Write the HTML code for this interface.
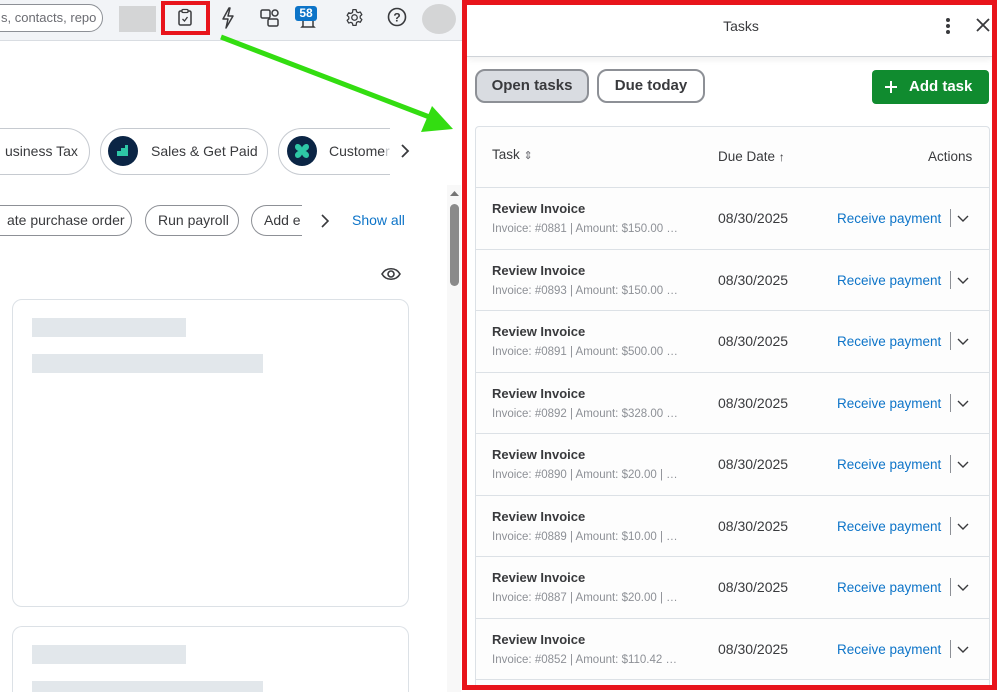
<!DOCTYPE html>
<html style="width:999px;height:692px;overflow:hidden"><head><meta charset="utf-8"><style>
*{box-sizing:border-box;margin:0;padding:0}
body{width:999px;height:692px;overflow:hidden;background:#fff;font-family:"Liberation Sans",Arial,sans-serif;position:relative;color:#393a3d}
.abs{position:absolute}
.topbar{left:0;top:0;width:465px;height:41px;background:#f2f4f7;border-bottom:1px solid #d9dde2}
.pill{position:absolute;border:1px solid #c6cad0;border-radius:24px;background:#fff;font-size:14px;color:#393a3d;white-space:nowrap;overflow:hidden}
.chip{position:absolute;border:1px solid #8d9096;border-radius:16px;background:#fff;font-size:14px;color:#393a3d;white-space:nowrap;overflow:hidden;height:31px;line-height:29px;padding:0 12px}
.card{position:absolute;left:12px;width:397px;border:1px solid #dce1e6;border-radius:10px;background:#fff}
.sk{position:absolute;background:#e2e7eb}
.panel{left:462px;top:0;width:535px;height:690px;border:5px solid #e8141b;background:#fff;overflow:hidden}
.row{position:absolute;left:0;width:514px;height:62px;border-top:1px solid #dce1e6}
.t1{position:absolute;left:16px;top:13px;font-size:13px;font-weight:bold;color:#393a3d}
.t2{position:absolute;left:16px;top:35px;font-size:11.5px;color:#8d9096;white-space:nowrap}
.dd{position:absolute;left:242px;top:22px;font-size:14px;color:#393a3d}
.rp{position:absolute;left:361px;top:23px;font-size:13.5px;color:#0d74c8}
.sep{position:absolute;left:474px;top:21px;width:1px;height:18px;background:#8d9096}
.chev{position:absolute;left:481px;top:27px}
</style></head><body>
<div class="abs topbar"></div>
<div class="pill" style="left:-20px;top:4px;width:123px;height:28px;line-height:26px;border-color:#8d9096;padding-left:20px;font-size:13px;color:#6b6c72">s, contacts, repo</div>
<div class="abs" style="left:119px;top:6px;width:37px;height:26px;background:#d4d5d6"></div>
<div class="abs" style="left:161px;top:1px;width:49px;height:34px;border:4px solid #e8141b"></div>
<svg class="abs" style="left:176px;top:8px" width="18" height="20" viewBox="0 0 18 20"><rect x="3" y="3" width="12" height="14" rx="1.5" fill="none" stroke="#393a3d" stroke-width="1.5"/><rect x="6" y="1.5" width="6" height="3" rx="1" fill="#fff" stroke="#393a3d" stroke-width="1.3"/><path d="M6.5 11l2 2 3-4" fill="none" stroke="#393a3d" stroke-width="1.3"/></svg>
<svg class="abs" style="left:220px;top:7px" width="16" height="22" viewBox="0 0 16 22"><path d="M9 1L3 12h5l-2 9 7-12H8l2-8z" fill="none" stroke="#393a3d" stroke-width="1.5" stroke-linejoin="round"/></svg>
<svg class="abs" style="left:260px;top:8px" width="20" height="20" viewBox="0 0 20 20"><rect x="1" y="2" width="9" height="8" rx="1.5" fill="none" stroke="#393a3d" stroke-width="1.5"/><rect x="12" y="2" width="6" height="6" rx="3" fill="none" stroke="#393a3d" stroke-width="1.5"/><rect x="8" y="11" width="10" height="7" rx="1.5" fill="none" stroke="#393a3d" stroke-width="1.5"/></svg>
<svg class="abs" style="left:300px;top:14px" width="16" height="16" viewBox="0 0 16 16"><path d="M3 12V7a5 5 0 0110 0v5l1 1H2z" fill="none" stroke="#393a3d" stroke-width="1.5"/></svg>
<div class="abs" style="left:295px;top:6px;width:22px;height:15px;background:#0d74c8;border-radius:3px;color:#fff;font-size:12px;font-weight:bold;text-align:center;line-height:15px">58</div>
<svg class="abs" style="left:345px;top:8px" width="19" height="19" viewBox="0 0 24 24"><path d="M12 8.5a3.5 3.5 0 100 7 3.5 3.5 0 000-7z M10 2h4l.6 2.8 2 1.1 2.7-.9 2 3.4-2.1 1.9v2.4l2.1 1.9-2 3.4-2.7-.9-2 1.1L14 22h-4l-.6-2.8-2-1.1-2.7.9-2-3.4 2.1-1.9V11.3L2.7 9.4l2-3.4 2.7.9 2-1.1z" fill="none" stroke="#393a3d" stroke-width="1.6" stroke-linejoin="round"/></svg>
<svg class="abs" style="left:387px;top:7px" width="20" height="20" viewBox="0 0 20 20"><circle cx="10" cy="10" r="8.5" fill="none" stroke="#393a3d" stroke-width="1.6"/><text x="10" y="14.5" font-size="12" font-weight="bold" text-anchor="middle" fill="#393a3d" font-family="Liberation Sans">?</text></svg>
<div class="abs" style="left:422px;top:4px;width:34px;height:30px;border-radius:50%;background:#d4d5d6"></div>

<div class="pill" style="left:-30px;top:128px;width:120px;height:47px;line-height:45px;padding-left:34px">usiness Tax</div>
<div class="pill" style="left:100px;top:128px;width:168px;height:47px;line-height:45px;padding-left:50px">Sales &amp; Get Paid</div>
<div class="abs" style="left:108px;top:136px;width:30px;height:30px;border-radius:50%;background:#0b2545"></div>
<svg class="abs" style="left:114px;top:142px" width="18" height="18" viewBox="0 0 18 18"><path d="M3 14V9h4V6h4V3h3v11z" fill="#2ec7a6"/></svg>
<div class="pill" style="left:278px;top:128px;width:112px;height:47px;line-height:45px;padding-left:50px;border-right:none;border-radius:24px 0 0 24px;color:#393a3d">Custome<span style="color:#c0c3c8">r</span></div>
<div class="abs" style="left:287px;top:136px;width:30px;height:30px;border-radius:50%;background:#0b2545"></div>
<svg class="abs" style="left:292px;top:141px" width="20" height="20" viewBox="0 0 20 20"><path d="M10 6.5C8 2 3 2 3 6c0 2 2 3.5 3.5 4C5 10.5 3 12 3 14c0 4 5 4 7-.5 2 4.5 7 4.5 7 .5 0-2-2-3.5-3.5-4 1.5-.5 3.5-2 3.5-4 0-4-5-4-7 .5z" fill="#2ec7a6"/></svg>
<svg class="abs" style="left:399px;top:143px" width="12" height="16" viewBox="0 0 12 16"><path d="M3 2l6 6-6 6" fill="none" stroke="#393a3d" stroke-width="1.8"/></svg>

<div class="chip" style="left:-20px;top:205px;width:152px;padding-left:26px">ate purchase order</div>
<div class="chip" style="left:145px;top:205px;width:94px">Run payroll</div>
<div class="chip" style="left:251px;top:205px;width:51px;border-right:none;border-radius:16px 0 0 16px">Add e</div>
<svg class="abs" style="left:319px;top:213px" width="12" height="16" viewBox="0 0 12 16"><path d="M3 2l6 6-6 6" fill="none" stroke="#393a3d" stroke-width="1.6"/></svg>
<div class="abs" style="left:352px;top:212px;font-size:14px;color:#0d74c8">Show all</div>

<div class="abs" style="left:447px;top:185px;width:14px;height:507px;background:#f8f8f8"></div>
<svg class="abs" style="left:450px;top:190px" width="9" height="7" viewBox="0 0 9 7"><path d="M0 6L4.5 1 9 6z" fill="#757575"/></svg>
<div class="abs" style="left:450px;top:204px;width:9px;height:82px;border-radius:5px;background:#8a8a8a"></div>
<svg class="abs" style="left:381px;top:266px" width="20" height="16" viewBox="0 0 20 16"><path d="M1 8c4-7 14-7 18 0-4 7-14 7-18 0z" fill="none" stroke="#393a3d" stroke-width="1.6"/><circle cx="10" cy="8" r="3" fill="none" stroke="#393a3d" stroke-width="1.6"/></svg>
<div class="card" style="top:299px;height:308px"></div>
<div class="sk" style="left:32px;top:318px;width:154px;height:19px"></div>
<div class="sk" style="left:32px;top:354px;width:231px;height:19px"></div>
<div class="card" style="top:626px;height:66px;border-bottom:none;border-radius:10px 10px 0 0"></div>
<div class="sk" style="left:32px;top:645px;width:154px;height:19px"></div>
<div class="sk" style="left:32px;top:681px;width:231px;height:11px"></div>

<svg class="abs" style="left:0;top:0" width="470" height="140" viewBox="0 0 470 140"><line x1="221" y1="37" x2="432" y2="118" stroke="#33dd11" stroke-width="5"/><path d="M453 129L432 106 421 132z" fill="#33dd11"/></svg>

<div class="abs panel">
  <div class="abs" style="left:0;top:0;width:525px;height:52px;border-bottom:1px solid #cfd3d8;box-shadow:0 3px 6px rgba(0,0,0,.06)"></div>
  <div class="abs" style="left:0;top:13px;width:548px;text-align:center;font-size:14px;color:#393a3d">Tasks</div>
  <svg class="abs" style="left:478px;top:11px" width="6" height="20" viewBox="0 0 6 20"><circle cx="3" cy="4" r="2" fill="#393a3d"/><circle cx="3" cy="10" r="2" fill="#393a3d"/><circle cx="3" cy="16" r="2" fill="#393a3d"/></svg>
  <svg class="abs" style="left:508px;top:12px" width="16" height="16" viewBox="0 0 16 16"><path d="M2 2l12 12M14 2L2 14" stroke="#393a3d" stroke-width="1.8"/></svg>
  <div class="abs" style="left:8px;top:64px;width:114px;height:34px;border:2px solid #8d9096;border-radius:10px;background:#d9dce1;font-size:15px;font-weight:bold;text-align:center;line-height:30px;color:#393a3d">Open tasks</div>
  <div class="abs" style="left:130px;top:64px;width:108px;height:34px;border:2px solid #8d9096;border-radius:10px;background:#fff;font-size:15px;font-weight:bold;text-align:center;line-height:30px;color:#393a3d">Due today</div>
  <div class="abs" style="left:405px;top:65px;width:117px;height:34px;border-radius:4px;background:#108b2f;color:#fff;font-size:15px;font-weight:bold;line-height:34px;padding-left:37px">Add task</div>
  <svg class="abs" style="left:417px;top:75px" width="14" height="14" viewBox="0 0 14 14"><path d="M7 1v12M1 7h12" stroke="#fff" stroke-width="2"/></svg>
  <div class="abs" style="left:8px;top:121px;width:515px;height:559px;border:1px solid #dce1e6;border-bottom:none;border-radius:4px 4px 0 0;background:#fdfdfd;overflow:hidden">
    <div class="abs" style="left:16px;top:20px;font-size:13.5px">Task <span style="font-size:11px;color:#6b6c72">⇕</span></div>
    <div class="abs" style="left:242px;top:22px;font-size:13.5px">Due Date <span style="font-size:12px">↑</span></div>
    <div class="abs" style="left:452px;top:22px;font-size:13.5px">Actions</div>
    <div class="row" style="top:60px"><div class="t1">Review Invoice</div><div class="t2">Invoice: #0881 | Amount: $150.00 …</div><div class="dd">08/30/2025</div><div class="rp">Receive payment</div><div class="sep"></div><svg class="chev" width="12" height="8" viewBox="0 0 12 8"><path d="M1 1l5 5 5-5" fill="none" stroke="#393a3d" stroke-width="1.4"/></svg></div>
    <div class="row" style="top:122px"><div class="t1">Review Invoice</div><div class="t2">Invoice: #0893 | Amount: $150.00 …</div><div class="dd">08/30/2025</div><div class="rp">Receive payment</div><div class="sep"></div><svg class="chev" width="12" height="8" viewBox="0 0 12 8"><path d="M1 1l5 5 5-5" fill="none" stroke="#393a3d" stroke-width="1.4"/></svg></div>
    <div class="row" style="top:183px"><div class="t1">Review Invoice</div><div class="t2">Invoice: #0891 | Amount: $500.00 …</div><div class="dd">08/30/2025</div><div class="rp">Receive payment</div><div class="sep"></div><svg class="chev" width="12" height="8" viewBox="0 0 12 8"><path d="M1 1l5 5 5-5" fill="none" stroke="#393a3d" stroke-width="1.4"/></svg></div>
    <div class="row" style="top:245px"><div class="t1">Review Invoice</div><div class="t2">Invoice: #0892 | Amount: $328.00 …</div><div class="dd">08/30/2025</div><div class="rp">Receive payment</div><div class="sep"></div><svg class="chev" width="12" height="8" viewBox="0 0 12 8"><path d="M1 1l5 5 5-5" fill="none" stroke="#393a3d" stroke-width="1.4"/></svg></div>
    <div class="row" style="top:306px"><div class="t1">Review Invoice</div><div class="t2">Invoice: #0890 | Amount: $20.00 | …</div><div class="dd">08/30/2025</div><div class="rp">Receive payment</div><div class="sep"></div><svg class="chev" width="12" height="8" viewBox="0 0 12 8"><path d="M1 1l5 5 5-5" fill="none" stroke="#393a3d" stroke-width="1.4"/></svg></div>
    <div class="row" style="top:368px"><div class="t1">Review Invoice</div><div class="t2">Invoice: #0889 | Amount: $10.00 | …</div><div class="dd">08/30/2025</div><div class="rp">Receive payment</div><div class="sep"></div><svg class="chev" width="12" height="8" viewBox="0 0 12 8"><path d="M1 1l5 5 5-5" fill="none" stroke="#393a3d" stroke-width="1.4"/></svg></div>
    <div class="row" style="top:429px"><div class="t1">Review Invoice</div><div class="t2">Invoice: #0887 | Amount: $20.00 | …</div><div class="dd">08/30/2025</div><div class="rp">Receive payment</div><div class="sep"></div><svg class="chev" width="12" height="8" viewBox="0 0 12 8"><path d="M1 1l5 5 5-5" fill="none" stroke="#393a3d" stroke-width="1.4"/></svg></div>
    <div class="row" style="top:491px;height:60px"><div class="t1">Review Invoice</div><div class="t2">Invoice: #0852 | Amount: $110.42 …</div><div class="dd">08/30/2025</div><div class="rp">Receive payment</div><div class="sep"></div><svg class="chev" width="12" height="8" viewBox="0 0 12 8"><path d="M1 1l5 5 5-5" fill="none" stroke="#393a3d" stroke-width="1.4"/></svg></div>
    <div class="abs" style="left:0;top:552px;width:514px;height:1px;background:#dce1e6"></div>
  </div>
</div>
</body></html>
